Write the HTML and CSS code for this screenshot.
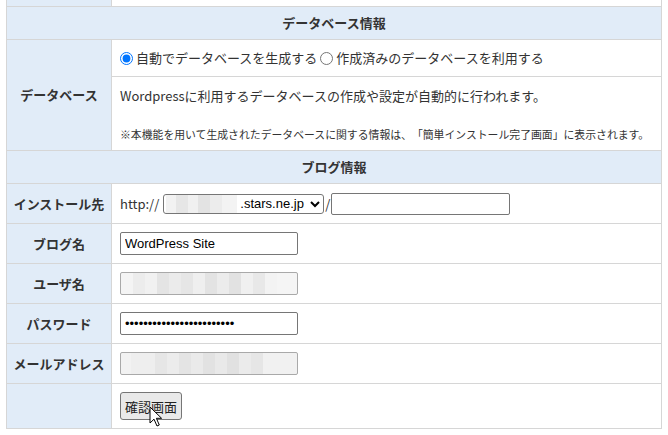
FILE: index.html
```html
<!DOCTYPE html>
<html lang="ja">
<head>
<meta charset="utf-8">
<title>簡単インストール</title>
<link rel="stylesheet" href="styles.css">
</head>
<body>
<div class="form">
  <div class="lab"></div><div class="val"></div>

  <div class="head">データベース情報</div>

  <div class="lab span2">データベース</div>
  <div class="val radios">
    <label class="opt"><input type="radio" name="db" checked>自動でデータベースを生成する</label>
    <label class="opt second"><input type="radio" name="db">作成済みのデータベースを利用する</label>
  </div>
  <div class="val desc">
    <p class="lead">Wordpressに利用するデータベースの作成や設定が自動的に行われます。</p>
    <p class="note">※本機能を用いて生成されたデータベースに関する情報は、「簡単インストール完了画面」に表示されます。</p>
  </div>

  <div class="head">ブログ情報</div>

  <div class="lab">インストール先</div>
  <div class="val"><span class="proto">http://</span><select class="domain"><option>.stars.ne.jp</option></select><span class="slash">/</span><input class="path" type="text"></div>

  <div class="lab">ブログ名</div>
  <div class="val"><input class="field" type="text" value="WordPress Site"></div>

  <div class="lab">ユーザ名</div>
  <div class="val"><input class="field blur" type="text"></div>

  <div class="lab">パスワード</div>
  <div class="val"><input class="field pw" type="password" value="aaaaaaaaaaaaaaaaaaaaaaaa"></div>

  <div class="lab">メールアドレス</div>
  <div class="val"><input class="field blur blur2" type="text"></div>

  <div class="lab"></div>
  <div class="val">
    <span class="btnwrap">
      <button class="confirm" type="button">確認画面</button>
      <svg class="cursor" width="14" height="22" viewBox="0 0 14 22"><path d="M1 1 V17 L5 13.2 L8 20 L10.3 19 L7.4 12.3 H12.6 Z" fill="#fff" stroke="#000" stroke-width="1" stroke-linejoin="miter"/></svg>
    </span>
  </div>
</div>
</body>
</html>
```
FILE: styles.css
```css
html, body {
  margin: 0;
  background: #fff;
}
body {
  font-family: "Noto Sans CJK JP", "Noto Sans", sans-serif;
  font-size: 13px;
  color: #333;
  text-spacing-trim: space-all;
}
.form {
  display: grid;
  grid-template-columns: 104px 549px;
  grid-template-rows: 6px 32px 36px 73px 32px 39px 39px 39px 39px 39px 44px;
  gap: 1px;
  background: #d6d6d6;
  padding: 0 1px 1px;
  margin-left: 6px;
  width: max-content;
}
.lab {
  background: #e1ecf8;
  font-weight: bold;
  display: flex;
  align-items: center;
  justify-content: center;
  line-height: 16px;
  white-space: nowrap;
}
.span2 { grid-row: span 2; }
.head {
  grid-column: span 2;
  background: #e1ecf8;
  font-weight: bold;
  display: flex;
  align-items: center;
  justify-content: center;
  line-height: 16px;
}
.val {
  background: #fff;
  display: flex;
  align-items: center;
  padding-left: 8px;
  line-height: 18px;
  white-space: nowrap;
}
.opt {
  display: inline-flex;
  align-items: center;
}
.opt input {
  margin: 0 3px 0 0;
  width: 13px;
  height: 13px;
}
.opt.second input { margin-left: 3px; }
.desc {
  display: block;
  padding: 10px 8px 0;
}
.desc p { margin: 0; }
.lead { line-height: 18px; }
.note {
  margin-top: 21px !important;
  font-size: 10.85px;
  line-height: 16px;
}
.proto { margin-right: 4px; }
.domain {
  box-sizing: border-box;
  width: 161px;
  height: 20px;
  font-family: "Liberation Sans", Arial, sans-serif;
  font-size: 13px;
  color: #000;
  padding: 0 0 0 72px;
  border: 1px solid #767676;
  border-radius: 3px;
  background:
    linear-gradient(to right, transparent 0 2px, #f2f2f2 2px 12px, #e6e6e6 12px 24px, #f0f0f0 24px 34px, #e3e3e3 34px 46px, #ececec 46px 58px, #f3f3f3 58px 73px, transparent 73px) no-repeat,
    #fff;
}
.slash { margin: 0 1px 0 1px; }
.path {
  box-sizing: border-box;
  width: 179px;
  height: 22px;
  border: 1px solid #767676;
  border-radius: 2px;
  font-family: "Liberation Sans", Arial, sans-serif;
  font-size: 13px;
  margin: 0;
}
.field {
  box-sizing: border-box;
  width: 178px;
  height: 23px;
  margin: 0;
  padding: 1px 4px;
  border: 1px solid #767676;
  border-radius: 2px;
  font-family: "Liberation Sans", Arial, sans-serif;
  font-size: 13px;
  color: #000;
  background: #fff;
}
.blur {
  border-color: #a9a9a9;
  background:
    linear-gradient(to right, #f4f4f4 0 12px, #ececec 12px 24px, #f1f1f1 24px 36px, #e4e4e4 36px 48px, #ebebeb 48px 60px, #e6e6e6 60px 72px, #efefef 72px 84px, #e3e3e3 84px 96px, #ececec 96px 108px, #e2e2e2 108px 120px, #f0f0f0 120px 132px, #e8e8e8 132px 144px, #f3f3f3 144px 156px, #f5f5f5 156px);
}
.blur2 {
  background:
    linear-gradient(to right, #f2f2f2 0 10px, #eeeeee 10px 34px, #e6e6e6 34px 46px, #ececec 46px 58px, #e4e4e4 58px 70px, #eaeaea 70px 82px, #e2e2e2 82px 94px, #e9e9e9 94px 106px, #e1e1e1 106px 118px, #ebebeb 118px 130px, #e6e6e6 130px 142px, #f1f1f1 142px);
}
.btnwrap {
  position: relative;
  display: inline-block;
}
.confirm {
  box-sizing: border-box;
  height: 28px;
  width: 62px;
  padding: 0;
  margin: 0;
  font-family: "Noto Sans CJK JP", sans-serif;
  font-size: 13px;
  color: #222;
  background: #e9e9e9;
  border: 1px solid #767676;
  border-radius: 3px;
  display: block;
}
.cursor {
  position: absolute;
  left: 29px;
  top: 14px;
}
```
